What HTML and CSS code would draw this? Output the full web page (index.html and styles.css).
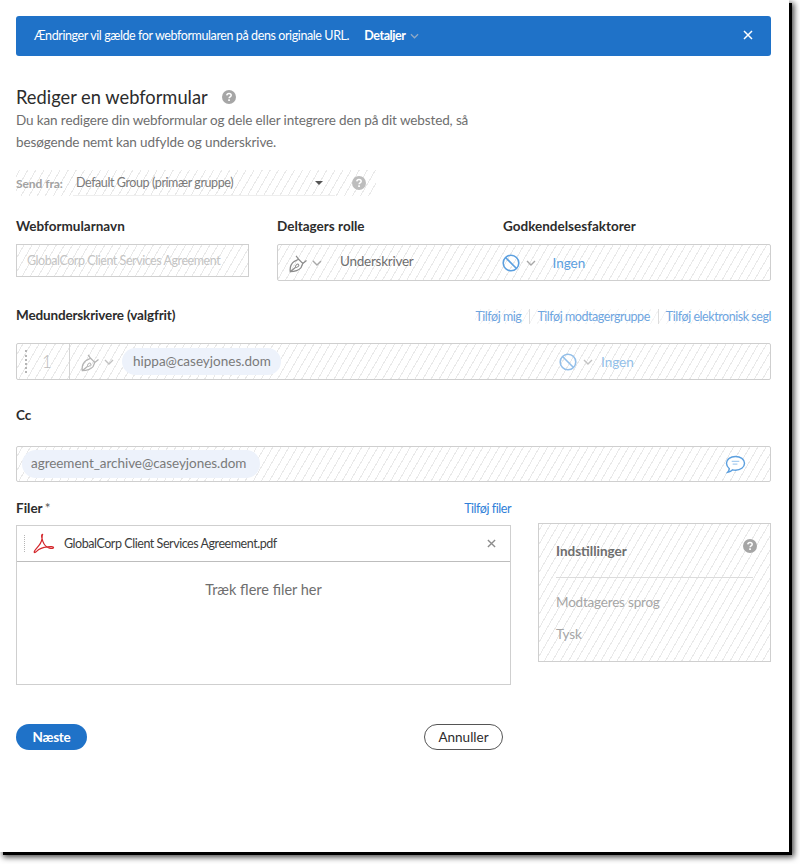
FILE: index.html
```html
<!DOCTYPE html>
<html lang="da">
<head>
<meta charset="utf-8">
<title>Rediger en webformular</title>
<link rel="stylesheet" href="styles.css">
</head>
<body>
<svg class="defs" width="0" height="0" aria-hidden="true">
  <symbol id="pen" viewBox="0 0 24 24"><path d="M1.500 22.500C.8 17 3 12.500 6.500 10L11.500 7.500 16.500 12.500 14.500 17.500C11.500 20.800 7 22.300 1.500 22.500zM8.500 3.500l3 4M21 9l-4.500 3.500M1.500 22.500l6.500-5.500" fill="none" stroke="currentColor" stroke-width="1.500" stroke-linejoin="round"/><ellipse cx="9.800" cy="15.300" rx="2.300" ry="1.500" transform="rotate(-40 9.800 15.300)" fill="none" stroke="currentColor" stroke-width="1.200"/></symbol>
  <symbol id="chev" viewBox="0 0 10 6"><path d="M1 1l4 4 4-4" fill="none" stroke="currentColor" stroke-width="1.400"/></symbol>
  <symbol id="none" viewBox="0 0 18 18"><circle cx="9" cy="9" r="7.800" fill="none" stroke="currentColor" stroke-width="1.600"/><path d="M3.500 3.500l11 11" stroke="currentColor" stroke-width="1.600"/></symbol>
  <symbol id="help" viewBox="0 0 14 14"><circle cx="7" cy="7" r="7" fill="currentColor"/><path d="M4.800 5.400C4.900 4.100 5.800 3.500 7 3.500c1.300 0 2.200.7 2.200 1.800 0 1.700-2.100 1.600-2.100 3" fill="none" stroke="#fff" stroke-width="1.500"/><rect x="6.200" y="9.300" width="1.700" height="1.700" fill="#fff"/></symbol>
  <symbol id="close" viewBox="0 0 10 10"><path d="M1 1l8 8M9 1l-8 8" stroke="currentColor" stroke-width="1.500"/></symbol>
</svg>
<div class="window">
  <div class="banner">
    <span class="banner-msg">Ændringer vil gælde for webformularen på dens originale URL.</span>
    <span class="banner-detail">Detaljer</span>
    <svg class="banner-chev"><use href="#chev"/></svg>
    <svg class="banner-close"><use href="#close"/></svg>
  </div>

  <div class="title-row">
    <h1 class="title">Rediger en webformular</h1>
    <svg class="help title-help"><use href="#help"/></svg>
  </div>
  <p class="intro">Du kan redigere din webformular og dele eller integrere den på dit websted, så<br>besøgende nemt kan udfylde og underskrive.</p>

  <div class="send-row hatch">
    <span class="send-label">Send fra:</span>
    <span class="send-select">Default Group (primær gruppe)<i class="caret"></i></span>
    <svg class="help send-help"><use href="#help"/></svg>
  </div>

  <div class="name-row">
    <div class="name-col">
      <div class="label">Webformularnavn</div>
      <div class="name-input hatch">GlobalCorp Client Services Agreement</div>
    </div>
    <div class="role-col">
      <div class="label-pair"><span class="label role-label">Deltagers rolle</span><span class="label">Godkendelsesfaktorer</span></div>
      <div class="role-box hatch">
        <svg class="pen"><use href="#pen"/></svg>
        <svg class="chev"><use href="#chev"/></svg>
        <span class="role-text">Underskriver</span>
        <svg class="no"><use href="#none"/></svg>
        <svg class="chev no-chev"><use href="#chev"/></svg>
        <span class="ingen">Ingen</span>
      </div>
    </div>
  </div>

  <div class="co-head">
    <div class="label label-tight">Medunderskrivere (valgfrit)</div>
    <div class="links hatch-soft">
      <span class="link">Tilføj mig</span>
      <span class="link">Tilføj modtagergruppe</span>
      <span class="link">Tilføj elektronisk segl</span>
    </div>
  </div>
  <div class="recipient hatch">
    <div class="num"><i class="dots"></i><span>1</span></div>
    <svg class="pen pen-dim"><use href="#pen"/></svg>
    <svg class="chev chev-dim"><use href="#chev"/></svg>
    <span class="chip chip-first">hippa@caseyjones.dom</span>
    <svg class="no no-dim"><use href="#none"/></svg>
    <svg class="chev no-chev chev-dim"><use href="#chev"/></svg>
    <span class="ingen ingen-dim">Ingen</span>
  </div>

  <div class="label cc-label">Cc</div>
  <div class="cc hatch">
    <span class="chip chip-cc">agreement_archive@caseyjones.dom</span>
    <svg class="msg" viewBox="0 0 22 20"><path d="M11 1.500c5.200 0 9.500 3 9.500 7.300 0 4.200-4.300 7.200-9.500 7.200-1 0-2-.1-3-.4-1.300 1.300-3 2.200-5.300 2.700 1-1.200 1.700-2.400 1.800-3.900C2.800 13 1.500 11 1.500 8.800c0-4.300 4.300-7.300 9.500-7.300z" fill="#fff" stroke="#5b9fdf" stroke-width="1.500"/><path d="M7 6.800h8M8 9.500h5" stroke="#a9cdf0" stroke-width="1.300"/></svg>
  </div>

  <div class="bottom">
    <div class="files-col">
      <div class="files-head">
        <span class="label">Filer<span class="star">*</span></span>
        <span class="link link-strong">Tilføj filer</span>
      </div>
      <div class="files">
        <div class="file">
          <i class="dots dots-file"></i>
          <svg class="pdf" viewBox="0 0 24 24"><path d="M11 2.500c-1.400 0-1.200 3 .2 7 1.500 4 3.700 6.500 7 7.300 2.500.6 4.300.3 4.300-.5 0-1-3-1.200-6.500-.8-4.500.5-8.500 2-11 4.500-1.500 1.400-2.500 1.800-2.700 1-.3-1.100 2.500-4 5-7 2.300-2.800 3.400-6.500 3.300-9.500C10.500 3.300 11.300 2.500 11 2.500z" fill="none" stroke="#d4272c" stroke-width="1.300"/></svg>
          <span class="file-name">GlobalCorp Client Services Agreement.pdf</span>
          <svg class="file-x"><use href="#close"/></svg>
        </div>
        <div class="drop">Træk flere filer her</div>
      </div>
    </div>
    <div class="settings hatch">
      <div class="settings-head">
        <span class="settings-title">Indstillinger</span>
        <svg class="help settings-help"><use href="#help"/></svg>
      </div>
      <div class="settings-item">Modtageres sprog</div>
      <div class="settings-item">Tysk</div>
    </div>
  </div>

  <div class="actions">
    <button class="btn-next">Næste</button>
    <button class="btn-cancel">Annuller</button>
  </div>
</div>
</body>
</html>
```
FILE: styles.css
```css
* { box-sizing: border-box; }
html, body { margin: 0; padding: 0; background: #fff; }
body { width: 800px; height: 864px; overflow: hidden; font-family: "Lato", "Liberation Sans", sans-serif; color: #2c2c2c; }
.defs { position: absolute; }
svg { display: block; flex: none; }
.window {
  width: 789px; height: 852px; padding: 16px 18px 0 16px; background: #fff;
  box-shadow: 3px 3px 0 #000, 4px 4px 6px 1px rgba(0,0,0,.75);
}
.hatch {
  background-image: repeating-linear-gradient(-60deg, #fff 0, #fff 6px, #e9e9e9 6px, #e9e9e9 7px);
}
.hatch-soft {
  background-image: repeating-linear-gradient(-60deg, #fff 0, #fff 6px, #f4f4f4 6px, #f4f4f4 7px);
}
.banner {
  height: 40px; display: flex; align-items: center; padding: 0 18px 1px; color: #fff;
  background: #1f72c8; border-radius: 3px; font-size: 12.500px; letter-spacing: -.4px;
}
.banner-msg { font-weight: 400; }
.banner-detail { margin-left: 15px; font-weight: 700; }
.banner-chev { width: 9px; height: 6px; margin-left: 4px; color: #8fa9c6; }
.banner-close { width: 10px; height: 10px; margin: -2px 0 0 auto; color: #fff; }

.title-row { display: flex; align-items: center; margin-top: 29px; height: 24px; }
.title { margin: 0; font-size: 18.300px; font-weight: 400; color: #2c2c2c; }
.help { width: 14px; height: 14px; color: #a6a6a6; }
.title-help { margin-left: 14px; }
.intro { margin: 0; font-size: 13.500px; letter-spacing: -.12px; line-height: 22px; color: #6e6e6e; }

.send-row { display: flex; align-items: center; height: 26px; width: 360px; margin-top: 17px; font-size: 12px; }
.send-label { width: 57px; font-weight: 700; color: #a2a2a2; letter-spacing: -.05px; }
.send-select { position: relative; display: block; width: 262px; padding-left: 3px; line-height: 24px; border-bottom: 1px solid #eee; color: #7a7a7a; font-size: 12.500px; letter-spacing: -.41px; }
.caret { position: absolute; right: 12px; top: 10px; border: 4px solid transparent; border-top: 4px solid #555; border-bottom: 0; }
.send-help { margin-left: 17px; color: #bdbdbd; }

.label { font-size: 13.500px; font-weight: 700; color: #2c2c2c; line-height: 18px; }
.label-tight { letter-spacing: -.15px; }
.name-row { display: flex; margin-top: 21px; }
.name-col { width: 261px; }
.name-input {
  width: 233px; height: 33px; margin-top: 9px; padding-left: 10px; line-height: 31px;
  border: 1px solid #cfcfcf; font-size: 12.500px; letter-spacing: -.45px; color: #c4c4c4;
}
.role-col { flex: 1; }
.label-pair { display: flex; }
.role-label { width: 226px; }
.role-box {
  display: flex; align-items: center; height: 37px; margin-top: 9px; padding-left: 11px;
  border: 1px solid #cfcfcf; border-radius: 2px;
}
.pen { width: 20px; height: 20px; color: #8c8c8c; }
.chev { width: 10px; height: 6px; margin-left: 3px; color: #a8a8a8; }
.role-text { margin: 0 0 4px 18px; font-size: 13.500px; letter-spacing: -.25px; color: #6e6e6e; }
.no { width: 18px; height: 18px; margin-left: 0; color: #5b9fdf; }
.role-box .no { margin-left: 88px; }
.no-chev { margin-left: 6px; }
.role-box .no-chev { margin-left: 6px; }
.ingen { margin-left: 17px; font-size: 13.500px; color: #5b9fdf; }

.co-head { display: flex; justify-content: space-between; align-items: center; margin-top: 21px; height: 26px; }
.links { display: flex; align-items: center; margin-top: 3px; font-size: 12.500px; letter-spacing: -.45px; }
.link { color: #6ea5df; white-space: nowrap; }
.links .link + .link { margin-left: 8px; padding-left: 7px; border-left: 1px solid #ddd; }
.recipient {
  display: flex; align-items: center; height: 37px; margin-top: 15px;
  border: 1px solid #cfcfcf; border-radius: 2px;
}
.num { position: relative; width: 53px; height: 100%; padding-left: 8px; border-right: 1px solid #d4d4d4; text-align: center; line-height: 35px; font-size: 17px; font-weight: 300; color: #bcbcbc; flex: none; }
.dots { position: absolute; left: 8px; top: 6px; bottom: 6px; width: 0; border-left: 2px dotted #b5b5b5; }
.pen-dim { margin-left: 11px; color: #b4b4b4; }
.chev-dim { color: #c2c2c2; }
.chip { display: inline-block; background: #edf2fb; color: #7a7a7a; border-radius: 14px; font-size: 13.500px; height: 28px; line-height: 27px; }
.chip-first { margin-left: 8px; width: 159px; padding-left: 11px; height: 27px; }
.no-dim { margin-left: 278px; color: #93bfe9; }
.recipient .no-chev { margin-left: 6px; }
.ingen-dim { margin-left: 8px; color: #93bfe9; }
.cc-label { margin-top: 26px; }
.cc {
  display: flex; align-items: center; justify-content: space-between; height: 36px; margin-top: 22px; padding: 0 24px 0 5px;
  border: 1px solid #cfcfcf; border-radius: 2px;
}
.chip-cc { padding: 0 9px; width: 238px; letter-spacing: -.05px; text-align: left; }
.msg { width: 21px; height: 19px; }

.bottom { display: flex; margin-top: 15px; align-items: flex-start; }
.files-col { width: 495px; }
.files-head { display: flex; justify-content: space-between; align-items: center; height: 21px; }
.star { font-weight: 400; margin-left: 2px; color: #555; }
.link-strong { color: #2f80d8; font-size: 12.500px; letter-spacing: -.45px; margin-top: 2px; }
.files { height: 160px; margin-top: 7px; border: 1px solid #cfcfcf; }
.file { position: relative; display: flex; align-items: center; height: 36px; border-bottom: 1px solid #bdbdbd; }
.dots-file { left: 7px; top: 9px; bottom: 9px; border-left: 1px dotted #b5b5b5; }
.pdf { width: 23px; height: 23px; margin-left: 15px; }
.file-name { margin-left: 9px; font-size: 12.500px; letter-spacing: -.45px; color: #3c3c3c; }
.file-x { width: 9px; height: 9px; margin-left: auto; margin-right: 14px; color: #8c8c8c; }
.drop { text-align: center; margin-top: 19px; font-size: 14.500px; color: #6e6e6e; }
.settings { width: 233px; height: 139px; margin: 26px 0 0 27px; padding: 0 17px; border: 1px solid #cfcfcf; color: #a6a6a6; font-size: 13.500px; letter-spacing: -.2px; }
.settings-head { position: relative; height: 54px; padding-top: 19px; border-bottom: 1px solid #dcdcdc; }
.settings-title { font-weight: 700; color: #6e6e6e; font-size: 13.500px; letter-spacing: 0; }
.settings-help { position: absolute; right: -4px; top: 15px; }
.settings-item { margin-top: 14px; line-height: 18px; }
.settings-head + .settings-item { margin-top: 15px; }
.actions { display: flex; align-items: center; margin-top: 39px; }
.btn-next, .btn-cancel { height: 26px; border-radius: 13px; font: inherit; font-size: 13.500px; padding: 0; }
.btn-next { width: 71px; background: #1f72c8; border: 0; color: #fff; font-weight: 700; letter-spacing: -.3px; }
.btn-cancel { width: 79px; margin-left: 337px; background: #fff; border: 1px solid #555; color: #2c2c2c; }
```
